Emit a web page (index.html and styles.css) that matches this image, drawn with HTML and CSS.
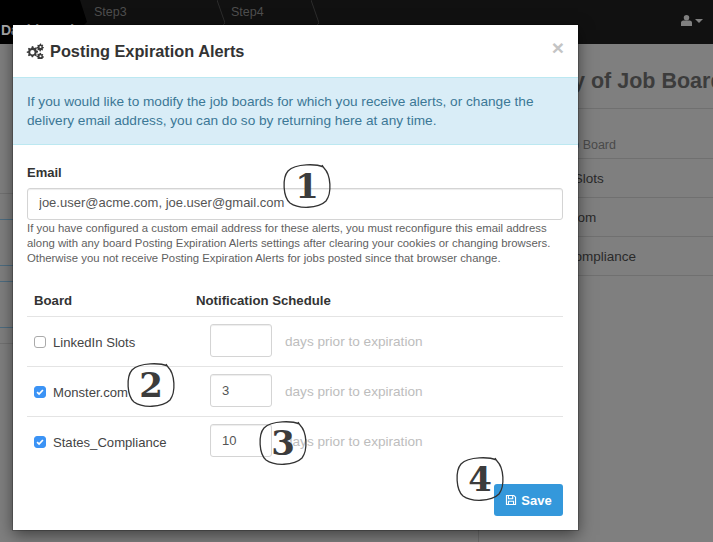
FILE: index.html
```html
<!DOCTYPE html>
<html lang="en">
<head>
<meta charset="utf-8">
<title>Posting Expiration Alerts</title>
<link rel="stylesheet" href="styles.css">
</head>
<body>
<div class="page">
  <nav class="navbar">
    <span class="brand">Dashboard</span>
    <div class="steps">
      <span class="step step-a">Step3</span>
      <svg class="chev" viewBox="0 0 8 26"><path d="M0 0l8 23-3 3"/></svg>
      <span class="step step-b">Step4</span>
      <svg class="chev" viewBox="0 0 8 26"><path d="M0 0l8 23-3 3"/></svg>
    </div>
    <span class="user">
      <svg class="user-icon" viewBox="0 0 12 12"><circle cx="6" cy="3" r="3"/><path d="M0 12V8.500C0 7 1.200 6 2.500 6h7C10.800 6 12 7 12 8.500V12z"/></svg>
      <span class="caret"></span>
    </span>
  </nav>
  <div class="backdrop-content">
    <h2 class="bg-title">Summary of Job Boards</h2>
    <div class="bg-row bg-head">Job Board</div>
    <div class="bg-row">LinkedIn Slots</div>
    <div class="bg-row">Monster.com</div>
    <div class="bg-row">States_Compliance</div>
  </div>
  <svg class="side-lines" viewBox="0 0 13 160">
    <path class="line-faint" d="M0 .5h13M0 150.500h13"/>
    <path class="line-blue" d="M0 26.500h13M0 72.500h13M0 88.500h13M0 134.500h13"/>
  </svg>
</div>

<section class="modal">
  <header class="modal-header">
    <svg class="gears" viewBox="0 0 18 16">
      <path fill-rule="evenodd" d="M6 3.200l1.200-.2.400 1.400 1.100.5 1.300-.7.900 1-.7 1.300.4 1.100 1.400.400v1.400l-1.400.4-.4 1.100.7 1.300-1 1-1.300-.7-1.100.4-.4 1.400H5.700l-.4-1.400-1.100-.4-1.300.7-1-1 .7-1.300-.4-1.100L.8 10V8.600l1.400-.4.400-1.100-.7-1.300 1-1 1.300.7 1.100-.5.400-1.400zM6.400 7.100a2.200 2.200 0 1 0 0 4.400 2.200 2.200 0 0 0 0-4.400z"/>
      <path fill-rule="evenodd" d="M14.300.5l.8.1.1 1 .7.400.9-.4.500.7-.6.800.2.800 1 .3v.9l-1 .3-.3.700.5.900-.6.600-.9-.5-.7.300-.3 1h-.9l-.2-1-.8-.3-.8.500-.6-.6.500-.9-.3-.7-1-.3v-.9l1-.3.300-.8-.6-.8.6-.6.800.4.800-.4zM14.500 2.900a1 1 0 1 0 0 2 1 1 0 0 0 0-2z"/>
      <path fill-rule="evenodd" d="M14.300 9.800l.8.1.1 1 .7.400.9-.4.500.7-.6.800.2.800 1 .3v.9l-1 .3-.3.700-.1.900-.9-.1-.7.3-.3.4h-.9l-.2-.6-.8-.3-.8.500-.6-.6.500-.9-.3-.7-1-.3v-.9l1-.3.300-.8-.6-.8.6-.6.800.4.800-.4zM14.500 12.200a1 1 0 1 0 0 2 1 1 0 0 0 0-2z"/>
    </svg>
    <h1 class="modal-title">Posting Expiration Alerts</h1>
    <span class="close">×</span>
  </header>
  <div class="alert">If you would like to modify the job boards for which you receive alerts, or change the delivery email address, you can do so by returning here at any time.</div>
  <div class="modal-body">
    <label class="field-label" for="email">Email</label>
    <input class="input input-email" id="email" type="text" value="joe.user@acme.com, joe.user@gmail.com">
    <p class="help">If you have configured a custom email address for these alerts, you must reconfigure this email address along with any board Posting Expiration Alerts settings after clearing your cookies or changing browsers. Otherwise you not receive Posting Expiration Alerts for jobs posted since that browser change.</p>
    <div class="table">
      <div class="tr th">
        <span class="col-board">Board</span>
        <span class="col-schedule">Notification Schedule</span>
      </div>
      <div class="tr">
        <span class="col-board"><span class="check"></span><span class="board-name">LinkedIn Slots</span></span>
        <span class="col-schedule"><input class="input input-days" type="text" value=""><span class="days">days prior to expiration</span></span>
      </div>
      <div class="tr">
        <span class="col-board"><span class="check checked"><svg viewBox="0 0 12 12"><path d="M2.500 6.200l2.400 2.400 4.600-5"/></svg></span><span class="board-name">Monster.com</span></span>
        <span class="col-schedule"><input class="input input-days" type="text" value="3"><span class="days">days prior to expiration</span></span>
      </div>
      <div class="tr">
        <span class="col-board"><span class="check checked"><svg viewBox="0 0 12 12"><path d="M2.500 6.200l2.400 2.400 4.600-5"/></svg></span><span class="board-name">States_Compliance</span></span>
        <span class="col-schedule"><input class="input input-days" type="text" value="10"><span class="days">days prior to expiration</span></span>
      </div>
    </div>
    <div class="actions">
      <button class="btn" type="button">
        <svg class="save-icon" viewBox="0 0 14 14"><path d="M1.700 1.700h8.600l2 2v8.600H1.700z"/><path d="M4 2v3.500h5V2M4 12.200V8.500h6v3.700"/></svg>
        Save
      </button>
    </div>
  </div>
</section>

<div class="mark mark-1"><svg viewBox="0 0 50 46"><path d="M41 4C35 1 14 0 6 8C0 15 1 34 8 40C16 46 36 46 44 38C50 30 49 12 42 5L40 2"/></svg><span>1</span></div>
<div class="mark mark-2"><svg viewBox="0 0 50 46"><path d="M41 4C35 1 14 0 6 8C0 15 1 34 8 40C16 46 36 46 44 38C50 30 49 12 42 5L40 2"/></svg><span>2</span></div>
<div class="mark mark-3"><svg viewBox="0 0 50 46"><path d="M41 4C35 1 14 0 6 8C0 15 1 34 8 40C16 46 36 46 44 38C50 30 49 12 42 5L40 2"/></svg><span>3</span></div>
<div class="mark mark-4"><svg viewBox="0 0 50 46"><path d="M41 4C35 1 14 0 6 8C0 15 1 34 8 40C16 46 36 46 44 38C50 30 49 12 42 5L40 2"/></svg><span>4</span></div>
</body>
</html>
```
FILE: styles.css
```css
* { box-sizing: border-box; }
html, body { margin: 0; height: 100%; overflow: hidden; }
body { font-family: "Liberation Sans", Arial, sans-serif; color: #333; background: #7f7f7f; }

.page { width: 713px; height: 542px; overflow: hidden; position: relative; }

.navbar { height: 44px; background: #111; display: flex; align-items: flex-start; }
.brand { width: 87px; height: 44px; background: #000; color: #a8a8a8; font-weight: 700; font-size: 14px; padding: 22px 0 0 1px; white-space: nowrap; overflow: hidden; clip-path: polygon(0 0, 80px 0, 87px 22px, 83px 26px, 83px 44px, 0 44px); }
.steps { display: flex; font-size: 12.5px; line-height: 14px; }
.step { padding-top: 5px; color: #4e4e4e; }
.step-a { width: 130px; padding-left: 7px; }
.step-b { width: 86px; padding-left: 6px; }
.chev { width: 8px; height: 26px; fill: none; stroke: #2c2c2c; stroke-width: 1; }
.user { margin-left: auto; display: flex; align-items: center; padding: 15px 10px 0 0; }
.user-icon { width: 11px; height: 11px; fill: #808080; }
.caret { width: 0; height: 0; border: 4px solid transparent; border-top-color: #808080; border-bottom: 0; margin-left: 3px; }

.backdrop-content { position: absolute; left: 478px; top: 44px; width: 300px; height: 500px; border-left: 1px solid #6f6f6f; white-space: nowrap; overflow: hidden; }
.bg-title { margin: 0; padding: 24px 0 0 8px; height: 65px; font-size: 21.5px; line-height: 26px; font-weight: 700; color: #3c3c3c; border-bottom: 1px solid #707070; }
.bg-row { height: 39px; padding: 11px 0 0 40px; border-bottom: 1px solid #707070; font-size: 13.5px; line-height: 18px; color: #2a2a2a; }
.bg-head { height: 50px; padding: 27px 0 0 80px; font-size: 12.5px; color: #4a4a4a; }

.side-lines { position: absolute; left: 0; top: 193px; width: 13px; height: 160px; }
.line-faint { fill: none; stroke: #717171; }
.line-blue { fill: none; stroke: #4d6c80; }

.modal { position: absolute; left: 13px; top: 25px; width: 565px; height: 505px; background: #fff; box-shadow: 0 0 0 1px rgba(0,0,0,.2), 0 5px 15px rgba(0,0,0,.5); }
.modal-header { height: 52px; display: flex; align-items: center; padding: 0 14px; position: relative; }
.gears { width: 18px; height: 16px; fill: #3a3a3a; margin-right: 6px; margin-left: -1px; }
.modal-title { margin: 0; font-size: 16.33px; font-weight: 700; color: #333; }
.close { position: absolute; right: 14px; top: 12px; font-size: 21px; line-height: 21px; font-weight: 700; color: #c4c4c4; }
.alert { height: 68px; padding: 14px 14px 0; background: #d9edf7; border-top: 1px solid #bce8f1; border-bottom: 1px solid #bce8f1; color: #3c7896; font-size: 13.65px; line-height: 19px; }
.modal-body { padding: 19px 15px 0 14px; }
.field-label { display: block; font-size: 13px; line-height: 18px; font-weight: 700; margin-bottom: 6px; }
.input { font-family: inherit; font-size: 13px; color: #555; background: #fff; border: 1px solid #d4d4d4; border-radius: 3px; box-shadow: inset 0 1px 1px rgba(0,0,0,.075); outline: 0; }
.input-email { display: block; width: 100%; height: 32px; padding: 0 11px 3px; }
.help { margin: 1px 0 0; font-size: 11.35px; line-height: 15px; color: #5f5f5f; }
.table { margin-top: 19px; }
.tr { display: flex; align-items: center; height: 50px; border-top: 1px solid #e4e4e4; font-size: 13.1px; }
.th { height: 31px; border-top: 0; font-weight: 700; align-items: flex-start; padding-top: 8px; font-size: 13.2px; }
.col-board { width: 163px; padding-left: 7px; display: flex; align-items: center; }
.col-schedule { display: flex; align-items: center; }
.th .col-schedule { padding-left: 6px; }
.tr:not(.th) .col-schedule { padding-left: 20px; margin-bottom: 2px; }
.check { width: 12px; height: 12px; border: 1px solid #aaa; border-radius: 3px; background: #fff; margin-right: 7px; }
.checked { background: #3b93f5; border-color: #3b93f5; }
.check svg { display: block; width: 10px; height: 10px; fill: none; stroke: #fff; stroke-width: 2; }
.board-name { color: #444; position: relative; top: 1px; }
.input-days { width: 62px; height: 33px; padding: 0 11px; }
.days { margin-left: 13px; color: #bdbdbd; font-size: 13.6px; position: relative; top: 1px; }
.actions { display: flex; justify-content: flex-end; margin-top: 18px; }
.btn { width: 69px; height: 32px; border: 0; border-radius: 3px; background: #3498db; color: #fff; font-family: inherit; font-size: 13px; font-weight: 700; display: flex; align-items: center; justify-content: center; gap: 4px; padding: 0; }
.save-icon { width: 12px; height: 12px; fill: none; stroke: #fff; stroke-width: 1.3; }

.mark { position: absolute; width: 50px; height: 46px; }
.mark svg { position: absolute; inset: 0; width: 100%; height: 100%; fill: none; stroke: #333; stroke-width: 1.3; }
.mark span { position: absolute; left: 0; right: 0; top: 1px; text-align: center; font-family: "DejaVu Serif", "Liberation Serif", serif; font-weight: 700; font-size: 34px; line-height: 44px; color: #3c3c3c; }
.mark-1 { left: 282px; top: 163px; }
.mark-2 { left: 126px; top: 362px; }
.mark-3 { left: 258px; top: 420px; }
.mark-4 { left: 455px; top: 456px; }
```
